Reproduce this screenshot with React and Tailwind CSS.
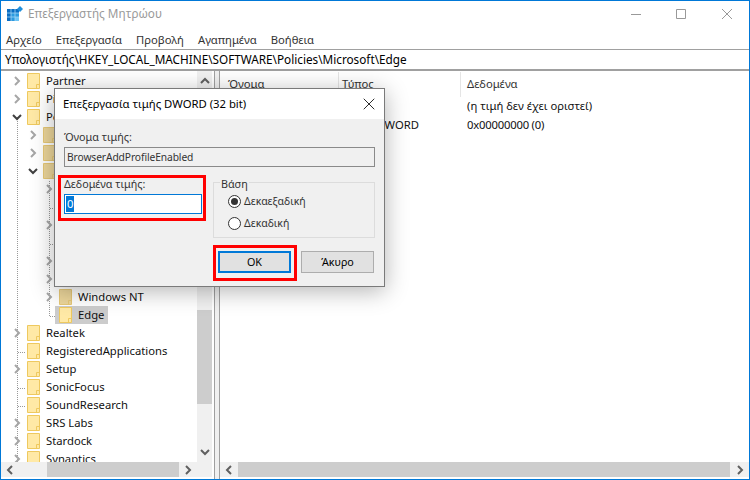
import { X } from 'lucide-react'

const font = "font-['Noto_Sans',sans-serif]"

const rows = [
  { level: 1, label: 'Partner', kind: 'closed' },
  { level: 1, label: 'Pi', kind: 'closed' },
  { level: 1, label: 'Policies', kind: 'open' },
  { level: 2, label: '', kind: 'closed', cut: true },
  { level: 2, label: '', kind: 'closed', cut: true },
  { level: 2, label: '', kind: 'open', cut: true },
  { level: 3, label: '', kind: 'closed' },
  { level: 3, label: '', kind: 'leaf' },
  { level: 3, label: '', kind: 'closed' },
  { level: 3, label: '', kind: 'leaf' },
  { level: 3, label: '', kind: 'closed' },
  { level: 3, label: '', kind: 'closed' },
  { level: 3, label: 'Windows NT', kind: 'closed', cut: true },
  { level: 3, label: 'Edge', kind: 'leaf', selected: true },
  { level: 1, label: 'Realtek', kind: 'closed' },
  { level: 1, label: 'RegisteredApplications', kind: 'leaf' },
  { level: 1, label: 'Setup', kind: 'closed' },
  { level: 1, label: 'SonicFocus', kind: 'leaf' },
  { level: 1, label: 'SoundResearch', kind: 'leaf' },
  { level: 1, label: 'SRS Labs', kind: 'closed' },
  { level: 1, label: 'Stardock', kind: 'closed' },
  { level: 1, label: 'Synaptics', kind: 'closed' },
]

const indent = { 1: 'pl-[10px]', 2: 'pl-[26px]', 3: 'pl-[42px]' }

function Folder({ cut }) {
  return (
    <svg width="13" height="16" viewBox="0 0 13 16" className="shrink-0">
      <path d="M.5.5h12v15H.5z" fill={cut ? '#ecd69b' : '#ffe9a6'} stroke={cut ? '#e6c877' : '#eec95f'} />
      <path d="M9.5 15.5v-4h3" fill="none" stroke={cut ? '#e6c877' : '#eec95f'} />
    </svg>
  )
}

function Chevron({ dir, className }) {
  const d = {
    right: 'M3 1l4 4-4 4',
    down: 'M1 3l4 4 4-4',
    up: 'M1 7l4-4 4 4',
    left: 'M7 1L3 5l4 4',
  }[dir]
  return (
    <svg width="10" height="10" viewBox="0 0 10 10" className={className}>
      <path d={d} fill="none" stroke="currentColor" strokeWidth="2" />
    </svg>
  )
}

function TreeRow({ row }) {
  return (
    <div className={`flex items-center h-[18px] shrink-0 ${indent[row.level]}`}>
      <div className="w-[11px] mr-px flex justify-center shrink-0">
        {row.kind === 'closed' && <Chevron dir="right" className="text-[#a6a6a6]" />}
        {row.kind === 'open' && <Chevron dir="down" className="text-[#404040]" />}
      </div>
      <div className={`flex items-center h-[18px] pl-[4px] pr-[4px] ${row.selected ? 'bg-[#cccccc]' : ''}`}>
        <Folder cut={row.cut} />
        <span className="ml-[6px] pt-px whitespace-nowrap">{row.label}</span>
      </div>
    </div>
  )
}

function HScrollBar({ thumb, className }) {
  return (
    <div className={`flex h-[15px] bg-[#f0f0f0] items-center ${className}`}>
      <div className="w-[17px] flex justify-center shrink-0">
        <Chevron dir="left" className="text-[#606060]" />
      </div>
      <div className={`h-full bg-[#cdcdcd] ${thumb}`} />
      <div className="flex-1 flex justify-center">
        <Chevron dir="right" className="text-[#606060]" />
      </div>
    </div>
  )
}

function Radio({ checked, label }) {
  return (
    <div className="flex items-center h-[14px]">
      <div className="w-[13px] h-[13px] rounded-full border border-[#333] bg-white flex items-center justify-center">
        {checked && <div className="w-[7px] h-[7px] rounded-full bg-[#333]" />}
      </div>
      <span className="ml-[3px] pt-px">{label}</span>
    </div>
  )
}

function Dialog() {
  return (
    <div className="absolute left-[53px] top-[87px] w-[331px] h-[199px] border border-[#7a7a7a] bg-[#f0f0f0] shadow-[0_4px_22px_rgba(0,0,0,0.3)] text-black text-[10.75px]">
      <div className="h-[30px] bg-white flex items-center justify-between pl-[8px] pr-[5px]">
        <span className="text-[11.3px]">Επεξεργασία τιμής DWORD (32 bit)</span>
        <X size={20} strokeWidth={1} className="text-black" />
      </div>
      <div className="px-[9px]">
        <div className="mt-[10px] h-[17px] leading-[17px] text-[#333]">Όνομα τιμής:</div>
        <div className="mt-[1px] h-[20px] border border-[#8a8a8a] bg-[#f0f0f0] flex items-center pl-[2px] pt-px text-[#333] text-[10.25px] tracking-[-0.1px]">
          BrowserAddProfileEnabled
        </div>
        <div className="mt-[15px] flex">
          <div className="w-[138px]">
            <div className="h-[17px] leading-[17px] -mt-[6px] text-[#333]">Δεδομένα τιμής:</div>
            <div className="mt-[1px] h-[20px] border border-[#0078d7] bg-white flex items-center pl-[1px]">
              <span className="bg-[#0078d7] text-white h-[16px] leading-[16px] px-px text-[11.25px]">0</span>
            </div>
          </div>
          <div className="relative ml-[11px] w-[162px] h-[56px] border border-[#dcdcdc]">
            <span className="absolute left-[6px] -top-[7px] bg-[#f0f0f0] px-px leading-[16px] text-[#333]">Βάση</span>
            <div className="flex flex-col gap-[8px] pl-[14px] pt-[11px] text-[#333] text-[10.5px]">
              <Radio checked label="Δεκαεξαδική" />
              <Radio label="Δεκαδική" />
            </div>
          </div>
        </div>
        <div className="mt-[13px] pr-px flex justify-end gap-[10px]">
          <button className="w-[73px] h-[22px] pt-px border-2 border-[#0078d7] bg-[#e1e1e1] text-black">OK</button>
          <button className="w-[73px] h-[22px] pt-px border border-[#adadad] bg-[#e1e1e1] text-black">Άκυρο</button>
        </div>
      </div>
      {/* κόκκινα πλαίσια */}
      <div className="absolute left-[3px] top-[86px] w-[148px] h-[46px] border-[3px] border-[#ff0000]" />
      <div className="absolute left-[158px] top-[156px] w-[84px] h-[36px] border-[3px] border-[#ff0000]" />
    </div>
  )
}

export default function App() {
  return (
    <div className={`relative w-[750px] h-[480px] flex flex-col overflow-hidden bg-white border border-[#0078d7] text-[11.25px] text-[#111] ${font}`}>
      <div className="h-[30px] pb-[4px] flex items-center shrink-0 text-[11.75px]">
        <svg width="16" height="17" viewBox="0 0 16 17" className="ml-[6px]">
          <rect x="0" y="3" width="12" height="12" fill="#0a6ec4" />
          <rect x="4" y="7" width="8" height="8" fill="#2d9be0" />
          <rect x="8" y="11" width="4" height="4" fill="#6cc4f5" />
          <path d="M4 3v12M8 3v12M0 7h12M0 11h12" stroke="#9ed4f5" strokeWidth=".8" />
          <path d="M13 0l3 3-3 3-3-3z" fill="#1f8fdc" />
        </svg>
        <span className="ml-[5px] text-[#999]">Επεξεργαστής Μητρώου</span>
        <div className="ml-auto mb-px flex items-center text-[#999]">
          <svg width="10" height="10" viewBox="0 0 10 10" className="mr-[35px]"><path d="M0 5.5h10" stroke="currentColor" /></svg>
          <svg width="10" height="10" viewBox="0 0 10 10" className="mr-[36px]"><path d="M.5.5h9v9h-9z" fill="none" stroke="currentColor" /></svg>
          <svg width="10" height="10" viewBox="0 0 10 10" className="mr-[17px]"><path d="M0 0l10 10M10 0L0 10" stroke="currentColor" /></svg>
        </div>
      </div>
      <div className="h-[18px] flex items-center pl-[5px] gap-[14px] shrink-0 text-[#333]">
        <span>Αρχείο</span>
        <span>Επεξεργασία</span>
        <span>Προβολή</span>
        <span>Αγαπημένα</span>
        <span>Βοήθεια</span>
      </div>
      <div className="h-[22px] border-t border-t-[#a0a0a0] border-b-2 border-b-[#a0a0a0] flex items-center pl-[4px] shrink-0 text-black text-[11.75px]">
        Υπολογιστής\HKEY_LOCAL_MACHINE\SOFTWARE\Policies\Microsoft\Edge
      </div>
      <div className="flex flex-1 min-h-0">
        <div className="w-[213px] shrink-0 flex flex-col">
          <div className="flex flex-1 min-h-0">
            <div className="relative w-[196px] pt-[1px] overflow-hidden flex flex-col">
              <svg width="196" height="392" className="absolute left-0 top-0" shapeRendering="crispEdges">
                <g stroke="#999" strokeDasharray="1 1" fill="none">
                  <path d="M16.5 46V392" />
                  <path d="M48.5 110V245.5H55" />
                  <path d="M49 137.5h6M49 173.5h6" />
                  <path d="M17 281.5h7M17 317.5h7M17 335.5h7" />
                </g>
              </svg>
              <div className="relative flex flex-col">
                {rows.map((row, i) => <TreeRow key={i} row={row} />)}
              </div>
            </div>
            <div className="w-[15px] bg-[#f0f0f0] flex flex-col items-center">
              <div className="h-[20px] flex items-center shrink-0"><Chevron dir="up" className="text-[#606060]" /></div>
              <div className="w-full h-[94px] mt-[219px] bg-[#cdcdcd] shrink-0" />
              <div className="mt-auto mb-px h-[18px] flex items-center shrink-0"><Chevron dir="down" className="text-[#606060]" /></div>
            </div>
            <div className="w-[2px]" />
          </div>
          <div className="flex h-[17px] shrink-0">
            <HScrollBar thumb="ml-[29px] w-[132px]" className="w-[196px]" />
            <div className="w-[15px] h-[15px] bg-[#f0f0f0]" />
          </div>
        </div>
        <div className="w-[1px] bg-[#a0a0a0] shrink-0" />
        <div className="w-[4px] bg-[#f0f0f0] shrink-0" />
        <div className="w-[1px] bg-[#a0a0a0] shrink-0" />
        <div className="flex-1 flex flex-col min-w-0">
          <div className="flex-1 min-h-0">
            <div className="flex h-[26px] pt-px items-center text-[#333]">
              <div className="w-[119px] h-full pl-[8px] flex items-center border-r border-[#e5e5e5]">Όνομα</div>
              <div className="w-[122px] h-full pl-[3px] flex items-center border-r border-[#e5e5e5]">Τύπος</div>
              <div className="pl-[6px]">Δεδομένα</div>
            </div>
            <div className="flex h-[19px] items-center">
              <div className="w-[119px]" />
              <div className="w-[122px] pl-[7px]">REG_SZ</div>
              <div className="pl-[6px]">(η τιμή δεν έχει οριστεί)</div>
            </div>
            <div className="flex h-[19px] items-center">
              <div className="w-[119px]" />
              <div className="w-[122px] pl-[11px]">REG_DWORD</div>
              <div className="pl-[6px] tracking-[-0.2px]">0x00000000 (0)</div>
            </div>
          </div>
          <div className="shrink-0 h-[17px]">
            <HScrollBar thumb="w-[492px] ml-px" />
          </div>
        </div>
      </div>
      <Dialog />
    </div>
  )
}
